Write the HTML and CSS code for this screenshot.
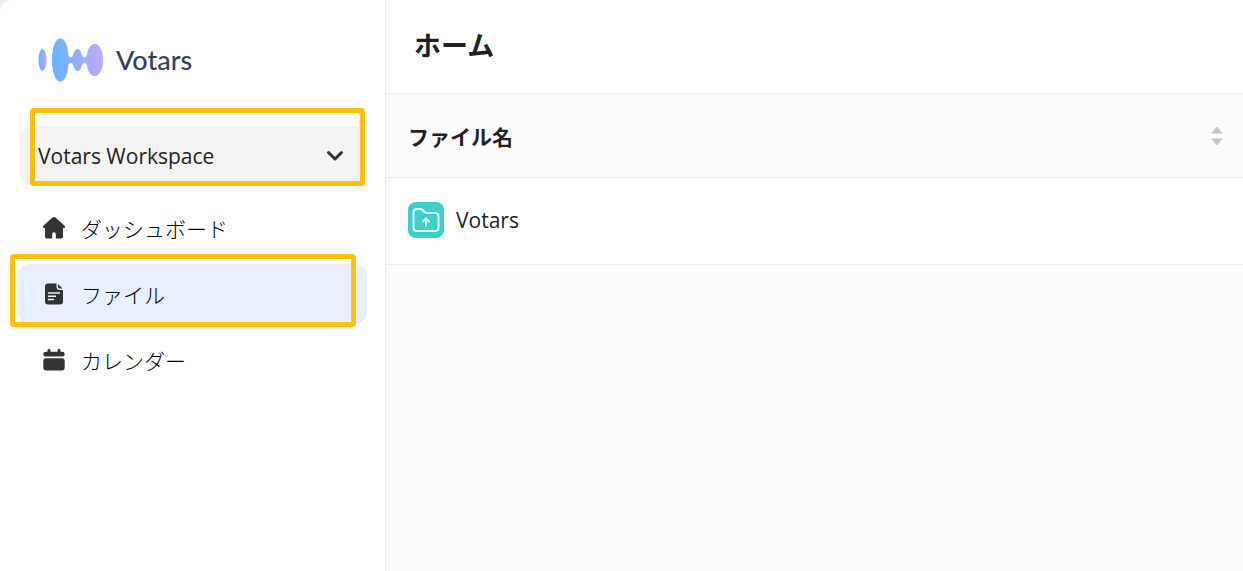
FILE: index.html
```html
<!DOCTYPE html>
<html lang="ja">
  <head>
    <meta charset="UTF-8" />
    <meta name="viewport" content="width=device-width, initial-scale=1" />
    <title>Votars</title>
    <link rel="stylesheet" href="styles.css">
  </head>
  <body>
    <div class="app">
      <aside class="sidebar">
        <a href="#" class="logo">
          <svg class="logo-mark" viewBox="0 0 66 44" aria-hidden="true">
            <defs>
              <linearGradient id="dot" x1="0" x2="1" y1="0" y2="0">
                <stop offset="0" stop-color="#6eb3ff" />
                <stop offset="1" stop-color="#b5a6fb" />
              </linearGradient>
              <linearGradient id="wave" gradientUnits="userSpaceOnUse" x1="18" x2="60" y1="0" y2="0">
                <stop offset="0" stop-color="#6eb3ff" />
                <stop offset="1" stop-color="#b8aaff" />
              </linearGradient>
            </defs>
            <ellipse cx="4.5" cy="22" rx="4" ry="11" fill="url(#dot)" />
            <path fill="url(#wave)" d="M22.300 0.300C27 .3 30 8.500 30.300 17Q30.600 19.300 33 19.300Q34.700 19.300 35.300 16.500C36 13 37.500 11 39.500 11S43 13 43.800 16.500Q44.500 19.300 46.500 19.300Q48.500 19.300 48.900 16.500C50 10 53 6 57 6C61.700 6 65 13 65 22S61.700 38 57 38C53 38 50 34 48.900 28Q48.500 25 46.500 25Q44.500 25 43.800 27.500C43 31 41.500 33 39.500 33S36 31 35.300 27.500Q34.700 25 33 25Q30.600 25 30.300 27C30 35.500 27 43.700 22.300 43.700C17.500 43.700 14 34 14 22S17.500 .3 22.300 .3Z" />
          </svg>
          <span>Votars</span>
        </a>

        <div class="workspace">
          <button type="button" class="workspace-button">
            <span>Votars Workspace</span>
            <svg class="chevron" viewBox="0 0 18 12" aria-hidden="true">
              <path d="M2.500 2.500L9 9L15.500 2.500" />
            </svg>
          </button>
          <div class="marker marker-workspace"></div>
        </div>

        <nav class="menu">
          <a href="#" class="menu-item">
            <svg class="menu-icon" viewBox="0 0 24 24" aria-hidden="true">
              <path d="M10.500 1.600Q12 .4 13.500 1.600L22.600 9.800C23.600 10.800 23.200 12 22 12H21V20.500Q21 22.600 19 22.600H13.800V18.500Q13.800 16.200 12 16.200T10.200 18.500V22.600H5Q3 22.600 3 20.500V12H2C.8 12 .4 10.800 1.400 9.800Z" />
            </svg>
            <span>ダッシュボード</span>
          </a>
          <div class="menu-current">
            <a href="#" class="menu-item active" aria-current="page">
              <svg class="menu-icon" viewBox="0 0 24 24" aria-hidden="true">
                <path d="M6 1.500H14.500V4.500Q14.500 8 18 8H21V19.500Q21 22.500 18 22.500H6Q3 22.500 3 19.500V4.500Q3 1.500 6 1.500Z" />
                <path d="M16 2L20.500 6.500H18Q16 6.500 16 4.500Z" />
                <path class="line" d="M6 11H18M6 14.300H14M6 17.600H12" />
              </svg>
              <span>ファイル</span>
            </a>
            <div class="marker marker-file"></div>
          </div>
          <a href="#" class="menu-item">
            <svg class="menu-icon" viewBox="0 0 24 24" aria-hidden="true">
              <path d="M3.800 3.800H5.500V2.200Q5.500 1 7 1T8.500 2.200V3.800H15.500V2.200Q15.500 1 17 1T18.500 2.200V3.800H20.200Q22.700 3.800 22.700 6.200T20.200 8.600H3.800Q1.300 8.600 1.300 6.200T3.800 3.800Z" />
              <path d="M4 10.200H20Q22.700 10.200 22.700 13V19.500Q22.700 22.500 19.700 22.500H4.300Q1.300 22.500 1.300 19.500V13Q1.300 10.200 4 10.200Z" />
            </svg>
            <span>カレンダー</span>
          </a>
        </nav>
      </aside>

      <main class="content">
        <h1 class="title">ホーム</h1>
        <table class="files">
          <thead>
            <tr>
              <th scope="col">
                <div class="column-head">
                  <span>ファイル名</span>
                  <button type="button" class="sort" aria-label="並べ替え">
                    <svg viewBox="0 0 14 20" aria-hidden="true">
                      <path d="M7 0.500L13 7.500H1ZM7 19.500L13 12.500H1Z" />
                    </svg>
                  </button>
                </div>
              </th>
            </tr>
          </thead>
          <tbody>
            <tr>
              <td>
                <a href="#" class="file">
                  <svg class="folder" viewBox="0 0 36 36" aria-hidden="true">
                    <rect width="36" height="36" rx="8" />
                    <path d="M5.500 11Q5.500 7 9 7H12Q13.500 7 14.500 8L16.500 10Q17.500 11 19 11H27Q30.500 11 30.500 14.500V25.500Q30.500 29 27 29H9Q5.500 29 5.500 25.500Z" />
                    <path d="M18 23.500V17M15 19.500L18 16.500L21 19.500" />
                  </svg>
                  <span>Votars</span>
                </a>
              </td>
            </tr>
          </tbody>
        </table>
      </main>
    </div>
  </body>
</html>
```
FILE: styles.css
```css
* {
  margin: 0;
  box-sizing: border-box;
}

body {
  font-family: "Open Sans", "Noto Sans CJK JP", sans-serif;
  font-size: 21px;
  color: #222;
  background: #eee;
}

a {
  color: inherit;
  text-decoration: none;
}

button {
  font: inherit;
  color: inherit;
  border: 0;
  cursor: pointer;
}

.app {
  display: flex;
  min-height: 100vh;
  background: #fff;
  border-top-left-radius: 12px;
  overflow: hidden;
}

/* Sidebar */
.sidebar {
  flex: 0 0 386px;
  padding: 38px 18px;
  border-right: 1px solid #ececec;
}

.logo {
  display: flex;
  align-items: center;
  gap: 12px;
  height: 44px;
  padding-left: 20px;
  font-family: Lato, sans-serif;
  font-size: 27px;
  font-weight: 500;
  line-height: 32px;
  color: #35405c;
}

.logo-mark {
  width: 66px;
  height: 44px;
}

.workspace {
  position: relative;
  margin-top: 44px;
  padding: 0 2px;
}

.workspace-button {
  display: flex;
  align-items: center;
  justify-content: space-between;
  width: 100%;
  height: 60px;
  padding: 0 21px 0 18px;
  border-radius: 12px;
  background: #f4f4f4;
}

.chevron {
  width: 18px;
  height: 12px;
  fill: none;
  stroke: #333;
  stroke-width: 3;
  stroke-linecap: round;
  stroke-linejoin: round;
}

.menu {
  display: flex;
  flex-direction: column;
  gap: 6px;
  margin-top: 12px;
}

.menu-current {
  position: relative;
}

.menu-item {
  display: flex;
  align-items: center;
  gap: 15px;
  height: 60px;
  padding: 0 24px;
  border-radius: 12px;
  font-family: "Noto Sans CJK JP", sans-serif;
  font-weight: 300;
  line-height: 30px;
  color: #000;
}

.menu-item.active {
  background: #e6f0ff;
}

.menu-icon {
  width: 24px;
  height: 24px;
  fill: #333;
}

.menu-icon .line {
  stroke: #e6f0ff;
  stroke-width: 1.5;
}

/* Highlight frames */
.marker {
  position: absolute;
  border: 5px solid #ffbf0d;
  border-radius: 4px;
  pointer-events: none;
}

.marker-workspace {
  top: -18px;
  right: 2px;
  bottom: 0;
  left: 12px;
}

.marker-file {
  top: -10px;
  right: 11px;
  bottom: -3px;
  left: -8px;
}

/* Content */
.content {
  flex: 1;
  min-width: 0;
  background: #fcfcfc;
}

.title {
  height: 93px;
  padding-left: 28px;
  font-size: 27px;
  line-height: 92px;
  background: #fff;
}

.files {
  width: 100%;
  border-collapse: collapse;
}

.files th,
.files td {
  padding: 0 19px 0 22px;
  text-align: left;
}

.files th {
  height: 84px;
  border-top: 1px solid #ececec;
  border-bottom: 1px solid #ececec;
}

.files td {
  height: 87px;
  padding-bottom: 2px;
  border-bottom: 1px solid #ececec;
  background: #fff;
}

.column-head {
  display: flex;
  align-items: center;
  justify-content: space-between;
}

.sort {
  display: flex;
  padding: 0;
  background: none;
}

.sort svg {
  width: 14px;
  height: 20px;
  fill: #c4c4c4;
}

.file {
  display: flex;
  align-items: center;
  gap: 12px;
}

.folder {
  width: 36px;
  height: 36px;
}

.folder rect {
  fill: #3ecfcb;
}

.folder path {
  fill: none;
  stroke: #e4ffff;
  stroke-width: 2;
  stroke-linecap: round;
  stroke-linejoin: round;
}
```
